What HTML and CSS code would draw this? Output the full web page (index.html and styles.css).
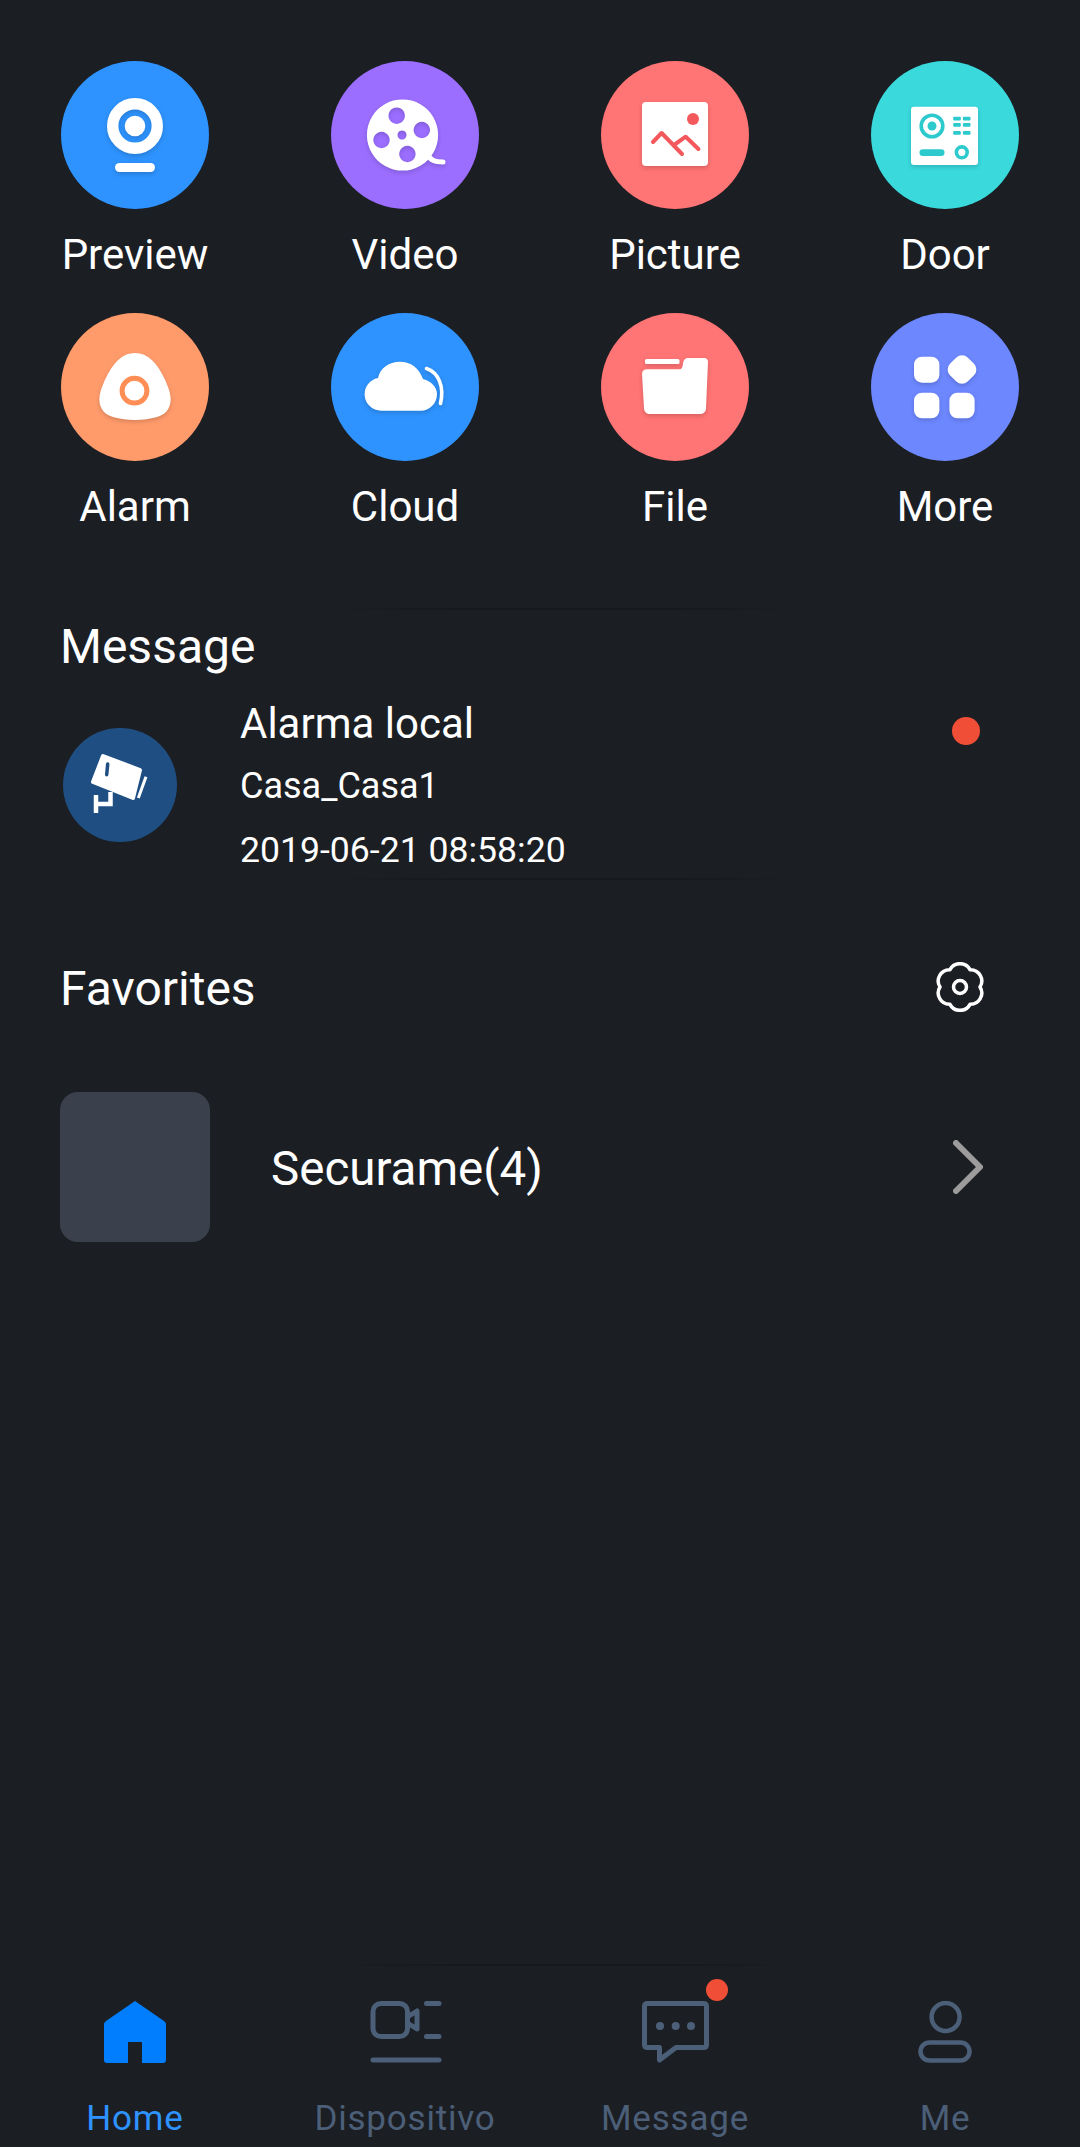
FILE: index.html
```html
<!DOCTYPE html>
<html lang="en">
<head>
  <meta charset="UTF-8">
  <title>Home</title>
  <link rel="stylesheet" href="styles.css">
</head>
<body>
  <div id="pagina">
    <div class="menu">
      <div class="tile">
        <svg class="disco" viewBox="0 0 148 148">
          <circle cx="74" cy="74" r="74" fill="#2e93fe"/>
          <g class="sombra">
            <circle cx="74" cy="65" r="22.300" fill="none" stroke="#fff" stroke-width="11.400"/>
            <circle cx="74" cy="65" r="10.300" fill="#fff"/>
            <rect x="54" y="102" width="40" height="9" rx="4.500" fill="#fff"/>
          </g>
        </svg>
        <span>Preview</span>
      </div>
      <div class="tile">
        <svg class="disco" viewBox="0 0 148 148">
          <circle cx="74" cy="74" r="74" fill="#9b6eff"/>
          <g class="sombra">
            <path d="M96 92c3 8 9 9 16 9" fill="none" stroke="#fff" stroke-width="5" stroke-linecap="round"/>
            <path fill="#fff" fill-rule="evenodd" d="M71.500 38.400a35.600 35.600 0 1 0 .01 0zM65.700 46.500a8.200 8.200 0 1 0 .01 0zM90.800 60.800a8.200 8.200 0 1 0 .01 0zM50.500 70.800a8.200 8.200 0 1 0 .01 0zM76.400 84.800a8.200 8.200 0 1 0 .01 0zM71 69.500a4.500 4.500 0 1 0 .01 0z"/>
          </g>
        </svg>
        <span>Video</span>
      </div>
      <div class="tile">
        <svg class="disco" viewBox="0 0 148 148">
          <circle cx="74" cy="74" r="74" fill="#ff7474"/>
          <g class="sombra">
            <rect x="41" y="41" width="66" height="64" rx="4" fill="#fff"/>
          </g>
          <circle cx="92" cy="58" r="6" fill="#f3595c"/>
          <path d="M52 81l8.600-9 20.400 21M73 84l11.700-8.300 12.700 12.300" fill="none" stroke="#f3595c" stroke-width="4" stroke-linecap="round" stroke-linejoin="round"/>
        </svg>
        <span>Picture</span>
      </div>
      <div class="tile">
        <svg class="disco" viewBox="0 0 148 148">
          <circle cx="74" cy="74" r="74" fill="#39d9dc"/>
          <g class="sombra">
            <rect x="40" y="45.700" width="67" height="58.300" rx="3" fill="#fff"/>
          </g>
          <g fill="#2cc9cd">
            <circle cx="61" cy="65" r="4.500"/>
            <rect x="48.500" y="88.300" width="25" height="6.700" rx="3.300"/>
            <rect x="82.200" y="55.700" width="7.600" height="3.800" rx="1"/>
            <rect x="91.900" y="55.700" width="7.600" height="3.800" rx="1"/>
            <rect x="82.200" y="62" width="7.600" height="3.800" rx="1"/>
            <rect x="91.900" y="62" width="7.600" height="3.800" rx="1"/>
            <rect x="82.200" y="70" width="7.600" height="3.800" rx="1"/>
            <rect x="91.900" y="70" width="7.600" height="3.800" rx="1"/>
          </g>
          <circle cx="61" cy="65" r="10.800" fill="none" stroke="#2cc9cd" stroke-width="3.600"/>
          <circle cx="90.800" cy="91.300" r="5.400" fill="none" stroke="#2cc9cd" stroke-width="3.600"/>
        </svg>
        <span>Door</span>
      </div>

      <div class="tile">
        <svg class="disco" viewBox="0 0 148 148">
          <circle cx="74" cy="74" r="74" fill="#ff9b6b"/>
          <g class="sombra">
            <path fill="#fff" d="M74 40c16 0 26 16 33 34 7 18-1 27-11 30-14 4-30 4-44 0-10-3-18-12-11-30 7-18 17-34 33-34z"/>
          </g>
          <circle cx="73.500" cy="77.700" r="12.400" fill="none" stroke="#ff8e56" stroke-width="5"/>
        </svg>
        <span>Alarm</span>
      </div>
      <div class="tile">
        <svg class="disco" viewBox="0 0 148 148">
          <circle cx="74" cy="74" r="74" fill="#2e93fe"/>
          <g class="sombra">
            <path fill="#fff" d="M50 97.700a16.500 16.500 0 0 1-3-32.700C49 55 58 48.700 69 48.700c11 0 19 6.300 23 17.300 8 2 14 8 14 15 0 10-8 16.700-16 16.700z"/>
            <path d="M95.500 55.500c12 4 18 18 14 35" fill="none" stroke="#fff" stroke-width="3.600" stroke-linecap="round"/>
          </g>
        </svg>
        <span>Cloud</span>
      </div>
      <div class="tile">
        <svg class="disco" viewBox="0 0 148 148">
          <circle cx="74" cy="74" r="74" fill="#ff7474"/>
          <g class="sombra">
            <rect x="44" y="46" width="34.500" height="5" rx="1.500" fill="#fff"/>
            <path fill="#fff" d="M46 56.300h32c3 0 3.500-2 4-6 .5-3 2-5.300 5-5.300h16c3 0 4 2 4 4l-2 46c0 4-3 6-6 6H49c-3 0-6-2-6-6l-2-34c0-3 2-4.700 5-4.700z"/>
          </g>
        </svg>
        <span>File</span>
      </div>
      <div class="tile">
        <svg class="disco" viewBox="0 0 148 148">
          <circle cx="74" cy="74" r="74" fill="#6d87ff"/>
          <g class="sombra" fill="#fff">
            <rect x="43" y="43.700" width="25.400" height="26" rx="8"/>
            <rect x="78.500" y="44" width="25" height="25" rx="8" transform="rotate(45 91 56.500)"/>
            <rect x="43" y="79.700" width="25.400" height="25.600" rx="8"/>
            <rect x="78.400" y="79.700" width="25.200" height="25.600" rx="8"/>
          </g>
        </svg>
        <span>More</span>
      </div>
    </div>

    <div class="risco risco-msg"></div>
    <h2 class="titulo titulo-msg">Message</h2>
    <div class="mensagem">
      <svg class="avatar" viewBox="0 0 114 114">
        <circle cx="57" cy="57" r="57" fill="#1f4f82"/>
        <path fill="#fff" stroke="#fff" stroke-width="4" stroke-linejoin="round" d="M40 28l37 14-7 28-40-16z"/>
        <path d="M44.700 36l-1 10.700" stroke="#1f4f82" stroke-width="3.500" stroke-linecap="round" fill="none"/>
        <path d="M83 48.700L75.300 70" stroke="#fff" stroke-width="3" fill="none"/>
        <path d="M33 67v18M33 76h14.500V64" stroke="#fff" stroke-width="4.500" fill="none"/>
      </svg>
      <div class="mensagem-texto">
        <div class="msg-nome">Alarma local</div>
        <div class="msg-linha">Casa_Casa1</div>
        <div class="msg-linha msg-data">2019-06-21 08:58:20</div>
      </div>
      <span class="ponto"></span>
    </div>
    <div class="risco risco-fav"></div>

    <div class="favoritos-topo">
      <h2 class="titulo">Favorites</h2>
      <svg class="engrenagem" viewBox="0 0 50 50">
        <path fill="none" stroke="#fff" stroke-width="3.500" stroke-linejoin="round" d="M15 7.680A11.300 11.300 0 0 1 35 7.680A11.300 11.300 0 0 1 45 25A11.300 11.300 0 0 1 35 42.320A11.300 11.300 0 0 1 15 42.320A11.300 11.300 0 0 1 5 25A11.300 11.300 0 0 1 15 7.680z"/>
        <circle cx="25" cy="25" r="6.500" fill="none" stroke="#fff" stroke-width="3.500"/>
      </svg>
    </div>

    <div class="grupo">
      <div class="miniatura"></div>
      <span class="grupo-nome">Securame(4)</span>
      <svg class="seta" viewBox="0 0 30 54">
        <path d="M3 3l24 24L3 51" fill="none" stroke="#9c9c9c" stroke-width="6" stroke-linecap="round" stroke-linejoin="round"/>
      </svg>
    </div>

    <div class="risco risco-barra"></div>
    <nav class="barra">
      <div class="aba ativa">
        <svg class="aba-icone" viewBox="0 0 80 62">
          <path fill="#007efe" d="M40 0l-29 20c-1 1-2 2-2 3v36c0 2 1 3 3 3h21V41h14v21h21c2 0 3-1 3-3V23c0-1-1-2-2-3z"/>
        </svg>
        <span>Home</span>
      </div>
      <div class="aba">
        <svg class="aba-icone" viewBox="0 0 80 62">
          <g fill="none" stroke="#4c5f78" stroke-width="5" stroke-linecap="round" stroke-linejoin="round">
            <rect x="8" y="2.500" width="34.500" height="33" rx="8"/>
            <path d="M42.500 16l9.500-6v18l-9.500-6"/>
            <path d="M61.500 2.500H74M61.500 35.500H74M8 59h66"/>
          </g>
        </svg>
        <span>Dispositivo</span>
      </div>
      <div class="aba">
        <svg class="aba-icone" viewBox="0 0 80 62">
          <path fill="none" stroke="#4c5f78" stroke-width="5" stroke-linejoin="round" d="M12.500 2.500h56c2 0 3 1 3 3v38c0 2-1 3-3 3H41L24.500 59V46.500h-12c-2 0-3-1-3-3v-38c0-2 1-3 3-3z"/>
          <circle cx="25" cy="25" r="4" fill="#4c5f78"/>
          <circle cx="40.700" cy="25" r="4" fill="#4c5f78"/>
          <circle cx="56" cy="25" r="4" fill="#4c5f78"/>
        </svg>
        <span class="aba-ponto"></span>
        <span>Message</span>
      </div>
      <div class="aba">
        <svg class="aba-icone" viewBox="0 0 80 62">
          <g fill="none" stroke="#4c5f78" stroke-width="4.500">
            <circle cx="40.600" cy="16" r="14"/>
            <rect x="15.500" y="41.500" width="49" height="18" rx="9"/>
          </g>
        </svg>
        <span>Me</span>
      </div>
    </nav>
  </div>
</body>
</html>
```

FILE: styles.css
```css
body {
  margin: 0;
  background-color: #1b1e23;
  color: white;
  font-family: Roboto, "Liberation Sans", sans-serif;
}

#pagina {
  height: 2147px;
  display: flex;
  flex-direction: column;
  overflow: hidden;
}

/* grade de atalhos */
.menu {
  display: grid;
  grid-template-columns: repeat(4, 270px);
  padding-top: 61px;
  row-gap: 14px;
}

.tile {
  display: flex;
  flex-direction: column;
  align-items: center;
  height: 238px;
  font-size: 42px;
  line-height: 50px;
}

.disco {
  width: 148px;
  height: 148px;
  margin-bottom: 21px;
}

.sombra {
  filter: drop-shadow(0 2px 2px rgba(0, 0, 0, 0.16));
}

/* riscos bem apagados entre as secoes */
.risco {
  height: 2px;
  width: 470px;
  background: linear-gradient(90deg, transparent, #17191e 25%, #17191e 75%, transparent);
}

.risco-msg {
  margin: 57px 0 0 330px;
}

.risco-fav {
  margin: 7px 0 0 330px;
}

.risco-barra {
  margin: auto 0 35px 330px;
}

.titulo {
  margin: 0;
  padding-left: 60px;
  font-size: 48px;
  line-height: 56px;
  font-weight: normal;
}

.titulo-msg {
  margin-top: 9px;
}

.mensagem {
  display: flex;
  align-items: center;
  margin-top: 24px;
  padding-left: 63px;
}

.avatar {
  width: 114px;
  height: 114px;
  margin-right: 63px;
  flex-shrink: 0;
}

.mensagem-texto {
  flex: 1;
}

.msg-nome {
  font-size: 42px;
  line-height: 50px;
}

.msg-linha {
  margin-top: 16px;
  font-size: 36px;
  line-height: 42px;
}

.msg-data {
  margin-top: 22px;
  font-size: 35.600px;
}

.ponto {
  align-self: flex-start;
  width: 28px;
  height: 28px;
  margin: 18px 100px 0 0;
  border-radius: 50%;
  background-color: #f04e37;
}

.favoritos-topo {
  display: flex;
  justify-content: space-between;
  align-items: center;
  margin-top: 81px;
  padding-right: 95px;
}

.engrenagem {
  width: 50px;
  height: 50px;
  margin-bottom: 4px;
}

.grupo {
  display: flex;
  align-items: center;
  margin-top: 75px;
  padding: 0 97px 0 60px;
}

.miniatura {
  width: 150px;
  height: 150px;
  border-radius: 18px;
  background-color: #3a414d;
}

.grupo-nome {
  flex: 1;
  margin-left: 61px;
  padding-top: 3px;
  font-size: 47.500px;
}

.seta {
  width: 30px;
  height: 54px;
}

/* barra de baixo */
.barra {
  display: grid;
  grid-template-columns: repeat(4, 270px);
  height: 146px;
}

.aba {
  position: relative;
  display: flex;
  flex-direction: column;
  align-items: center;
  font-size: 35px;
  letter-spacing: 0.8px;
  line-height: 40px;
  color: #4c5f78;
}

.aba.ativa {
  color: #2e93fe;
}

.aba-icone {
  width: 80px;
  height: 62px;
  margin-bottom: 36px;
}

.aba-ponto {
  position: absolute;
  top: -22px;
  left: 166px;
  width: 22px;
  height: 22px;
  border-radius: 50%;
  background-color: #f04e37;
}
```
